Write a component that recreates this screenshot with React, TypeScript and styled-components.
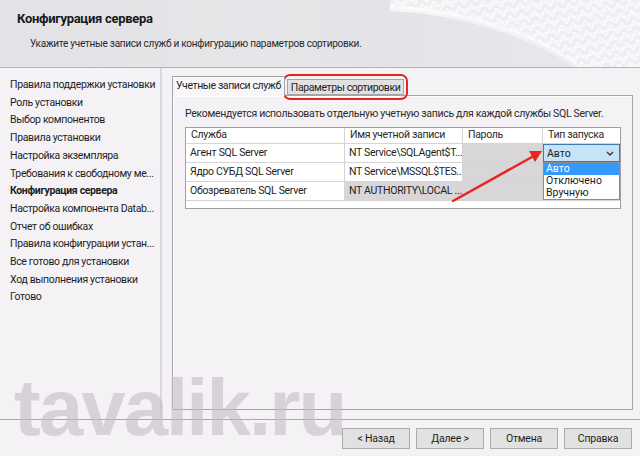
import styled, { createGlobalStyle } from 'styled-components';

const GlobalStyle = createGlobalStyle`
    html, body {
        margin: 0;
        padding: 0;
        background: #f5f2f6;
    }
    body {
        font-family: Roboto, "Noto Sans", sans-serif;
        color: #1e1e1e;
    }
`;

const Page = styled.div`
    position: relative;
    width: 640px;
    height: 456px;
    display: flex;
    flex-direction: column;
    overflow: hidden;
    background: #f5f2f6;
`;

const Header = styled.div`
    position: relative;
    height: 68px;
    flex-shrink: 0;
    box-sizing: border-box;
    border-bottom: 1px solid #b4b2ba;
    background: linear-gradient(90deg, #e3e2e6 0%, #e6e6e9 40%, #e4e4e8 60%, #ebe8ec 100%);
    padding: 11px 0 0 17px;
    overflow: hidden;
`;

const Title = styled.div`
    position: relative;
    font-size: 13px;
    font-weight: 700;
    letter-spacing: -0.3px;
    color: #1a1a1a;
`;

const Subtitle = styled.div`
    position: relative;
    margin: 12px 0 0 13px;
    font-size: 10px;
    letter-spacing: -0.25px;
    color: #2a2a2a;
`;

const Mesh = styled.svg`
    position: absolute;
    right: 0;
    top: 0;
`;

const Main = styled.div`
    display: flex;
    flex: 1;
    min-height: 0;
`;

const Nav = styled.ul`
    list-style: none;
    margin: 0;
    width: 162px;
    flex-shrink: 0;
    padding: 8px 0 0 10px;
    box-sizing: border-box;
    border-right: 2px solid #dcd8e0;
`;

const NavItem = styled.li<{ $active?: boolean }>`
    font-size: 10.5px;
    letter-spacing: -0.35px;
    line-height: 17.7px;
    white-space: nowrap;
    font-weight: ${p => (p.$active ? 700 : 400)};
    color: #1e1e1e;
`;

const Content = styled.div`
    flex: 1;
    display: flex;
    flex-direction: column;
    padding: 8px 8px 9px 10px;
`;

const TabStrip = styled.div`
    display: flex;
    align-items: flex-end;
    height: 19px;
    gap: 2px;
`;

const Tab = styled.div<{ $active?: boolean }>`
    position: relative;
    box-sizing: border-box;
    height: ${p => (p.$active ? '20px' : '16px')};
    margin-bottom: ${p => (p.$active ? '-1px' : '0')};
    padding: 0 3px;
    font-size: 10.5px;
    letter-spacing: -0.4px;
    line-height: ${p => (p.$active ? '17px' : '15px')};
    border: 1px solid #a5a5a5;
    border-bottom: ${p => (p.$active ? 'none' : '1px solid #a5a5a5')};
    background: ${p => (p.$active ? '#f8f6f9' : '#e1e1e1')};
    z-index: ${p => (p.$active ? 2 : 1)};
`;

const Highlight = styled.div`
    position: absolute;
    left: -5px;
    top: -6px;
    right: -5px;
    bottom: -6px;
    border: 2px solid #e6251f;
    border-radius: 7px;
`;

const Panel = styled.div`
    flex: 1;
    box-sizing: border-box;
    border: 1px solid #a5a5a5;
    box-shadow: inset 1px 1px 0 #ffffff;
    background: #f5f2f6;
    padding: 11px 11px 0 12px;
`;

const Hint = styled.div`
    font-size: 10.5px;
    letter-spacing: -0.3px;
    color: #2a2a2a;
    white-space: nowrap;
    margin-bottom: 7px;
`;

const Grid = styled.div`
    position: relative;
    box-sizing: border-box;
    width: 436px;
    height: 82px;
    border: 1px solid #a0a0a0;
    background: #ffffff;
`;

const Row = styled.div`
    display: grid;
    grid-template-columns: 159px 118px 80px 77px;
    height: 18px;
    border-bottom: 1px solid #d4d4d4;
    &:first-child {
        height: 15px;
    }
`;

const Cell = styled.div<{ $shade?: boolean }>`
    box-sizing: border-box;
    padding-left: 4px;
    font-size: 10.5px;
    letter-spacing: -0.3px;
    line-height: 17px;
    white-space: nowrap;
    overflow: hidden;
    border-right: 1px solid #d4d4d4;
    background: ${p => (p.$shade ? '#d8d6d9' : '#ffffff')};
    &:last-child {
        border-right: none;
    }
`;

const HeadCell = styled(Cell)`
    line-height: 14px;
    padding-left: 5px;
    color: #2a2a2a;
`;

const SelectCell = styled.div`
    position: relative;
    box-sizing: border-box;
    display: flex;
    align-items: center;
    justify-content: space-between;
    padding: 0 5px 0 3px;
    font-size: 10.5px;
    border: 1px solid #3d7bad;
    background: #c6e4f7;
`;

const DropList = styled.div`
    position: absolute;
    left: -1px;
    right: -1px;
    top: 17px;
    background: #ffffff;
    border: 1px solid #8c8c8c;
    z-index: 3;
`;

const DropItem = styled.div<{ $selected?: boolean }>`
    font-size: 10.5px;
    line-height: 12px;
    padding-left: 2px;
    background: ${p => (p.$selected ? '#3399ff' : '#ffffff')};
    color: ${p => (p.$selected ? '#ffffff' : '#1e1e1e')};
`;

const Footer = styled.div`
    height: 37px;
    flex-shrink: 0;
    box-sizing: border-box;
    border-top: 1px solid #a8a8a8;
    display: flex;
    justify-content: flex-end;
    align-items: flex-start;
    gap: 6px;
    padding: 8px 8px 0 0;
`;

const Button = styled.button`
    width: 68px;
    height: 21px;
    padding: 0;
    font-family: Roboto, "Noto Sans", sans-serif;
    font-size: 10.5px;
    letter-spacing: -0.2px;
    color: #1e1e1e;
    background: #e1e1e1;
    border: 1px solid #adadad;
`;

const Watermark = styled.div`
    position: absolute;
    left: 14px;
    top: 362px;
    font-family: "Liberation Sans", Arial, sans-serif;
    font-weight: 700;
    font-size: 80px;
    letter-spacing: -2px;
    color: rgba(196, 186, 196, 0.6);
    pointer-events: none;
`;

const Arrow = styled.svg`
    position: absolute;
    left: 0;
    top: 0;
    pointer-events: none;
    z-index: 5;
`;

const steps = [
    'Правила поддержки установки',
    'Роль установки',
    'Выбор компонентов',
    'Правила установки',
    'Настройка экземпляра',
    'Требования к свободному ме...',
    'Конфигурация сервера',
    'Настройка компонента Datab...',
    'Отчет об ошибках',
    'Правила конфигурации устан...',
    'Все готово для установки',
    'Ход выполнения установки',
    'Готово',
];

const Chevron = () => (
    <svg width="8" height="5" viewBox="0 0 8 5">
        <path d="M1 1 L4 4 L7 1" fill="none" stroke="#333" strokeWidth="1.3" />
    </svg>
);

const App = () => {
    return (
        <>
            <GlobalStyle />
            <Page>
                <Header>
                    <Mesh width="250" height="68" viewBox="0 0 250 68">
                        <defs>
                            <pattern id="net" width="12" height="10" patternUnits="userSpaceOnUse" patternTransform="rotate(-12)">
                                <path d="M0 10 L6 0 L12 10 M0 5 H12" fill="none" stroke="#ffffff" strokeWidth="1.2" />
                            </pattern>
                            <linearGradient id="fade" x1="0" y1="0" x2="1" y2="0">
                                <stop offset="0" stopColor="#ffffff" stopOpacity="0.7" />
                                <stop offset="1" stopColor="#ffffff" stopOpacity="0.3" />
                            </linearGradient>
                        </defs>
                        <path d="M0 0 H250 V68 H190 C150 38 80 12 0 8 Z" fill="#f0eef2" />
                        <path d="M0 0 H250 V68 H190 C150 38 80 12 0 8 Z" fill="url(#net)" opacity="0.9" />
                        <path d="M0 8 C80 12 150 38 190 68" fill="none" stroke="url(#fade)" strokeWidth="6" />
                    </Mesh>
                    <Title>Конфигурация сервера</Title>
                    <Subtitle>Укажите учетные записи служб и конфигурацию параметров сортировки.</Subtitle>
                </Header>
                <Main>
                    <Nav>
                        {steps.map(s => (
                            <NavItem key={s} $active={s === 'Конфигурация сервера'}>{s}</NavItem>
                        ))}
                    </Nav>
                    <Content>
                        <TabStrip>
                            <Tab $active>Учетные записи служб</Tab>
                            <Tab>
                                Параметры сортировки
                                <Highlight />
                            </Tab>
                        </TabStrip>
                        <Panel>
                            <Hint>Рекомендуется использовать отдельную учетную запись для каждой службы SQL Server.</Hint>
                            <Grid>
                                <Row>
                                    <HeadCell>Служба</HeadCell>
                                    <HeadCell>Имя учетной записи</HeadCell>
                                    <HeadCell>Пароль</HeadCell>
                                    <HeadCell>Тип запуска</HeadCell>
                                </Row>
                                <Row>
                                    <Cell>Агент SQL Server</Cell>
                                    <Cell>NT Service\SQLAgent$T...</Cell>
                                    <Cell $shade />
                                    <SelectCell>
                                        Авто
                                        <Chevron />
                                        <DropList>
                                            <DropItem $selected>Авто</DropItem>
                                            <DropItem>Отключено</DropItem>
                                            <DropItem>Вручную</DropItem>
                                        </DropList>
                                    </SelectCell>
                                </Row>
                                <Row>
                                    <Cell>Ядро СУБД SQL Server</Cell>
                                    <Cell>NT Service\MSSQL$TES...</Cell>
                                    <Cell $shade />
                                    <Cell />
                                </Row>
                                <Row>
                                    <Cell>Обозреватель SQL Server</Cell>
                                    <Cell $shade>NT AUTHORITY\LOCAL ...</Cell>
                                    <Cell $shade />
                                    <Cell />
                                </Row>
                            </Grid>
                        </Panel>
                    </Content>
                </Main>
                <Footer>
                    <Button>&lt; Назад</Button>
                    <Button>Далее &gt;</Button>
                    <Button>Отмена</Button>
                    <Button>Справка</Button>
                </Footer>
                <Watermark>tavalik.ru</Watermark>
                <Arrow width="640" height="456" viewBox="0 0 640 456">
                    <line x1="453" y1="201" x2="532" y2="157" stroke="#e8261f" strokeWidth="2.5" strokeLinecap="round" />
                    <path d="M542 151 L529 151 L535 162 Z" fill="#e8261f" />
                </Arrow>
            </Page>
        </>
    );
};

export default App;
